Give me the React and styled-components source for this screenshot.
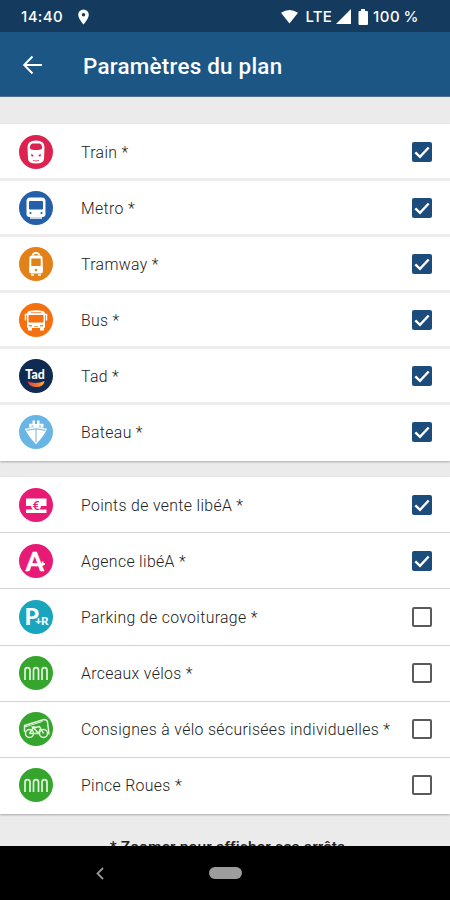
import { useState } from "react";
import styled, { createGlobalStyle } from "styled-components";

const GlobalStyle = createGlobalStyle`
  * {
    box-sizing: border-box;
  }
  body {
    margin: 0;
    font-family: Roboto, "Liberation Sans", sans-serif;
  }
`;

const Screen = styled.div`
  display: flex;
  flex-direction: column;
  width: 450px;
  height: 900px;
  overflow: hidden;
  background: #ebebeb;
`;

const StatusBar = styled.div`
  flex: none;
  display: flex;
  align-items: center;
  justify-content: space-between;
  height: 32px;
  padding: 1px 31px 0 21px;
  background: #143b5e;
  color: #fff;
  font-family: Inter, Roboto, sans-serif;
  font-size: 15px;
  font-weight: 500;
`;

const StatusGroup = styled.div`
  display: flex;
  align-items: center;
  svg {
    display: block;
  }
`;

const Time = styled.span`
  width: 57px;
  letter-spacing: 0.4px;
`;

const Network = styled.span`
  margin: 0 4px 0 7px;
  letter-spacing: 0.2px;
`;

const Battery = styled.span`
  margin-left: 5px;
  letter-spacing: 0.5px;
  word-spacing: -1px;
`;

const Header = styled.header`
  flex: none;
  display: flex;
  align-items: center;
  height: 65px;
  padding: 1px 22px 0;
  background: #1c5685;
  border-bottom: 1px solid #536f91;
`;

const BackButton = styled.button`
  display: flex;
  width: 61px;
  padding: 0;
  border: none;
  background: none;
  color: #fff;
`;

const Title = styled.h1`
  margin: 2px 0 0;
  color: #fff;
  font-size: 22.4px;
  font-weight: 500;
  letter-spacing: 0.24px;
`;

const Content = styled.main`
  flex: 1;
  min-height: 0;
  overflow: hidden;
  padding-top: 27px;
`;

const Card = styled.section`
  height: 337px;
  margin-bottom: 16px;
  padding-top: ${(p) => (p.$thin ? 0 : "1px")};
  display: grid;
  grid-template-rows: repeat(6, 1fr);
  background: #fff;
  box-shadow: 0 1px 2px rgba(0, 0, 0, 0.28);
`;

const Row = styled.label`
  display: flex;
  align-items: center;
  min-height: 0;
  padding: 0 18px 0 19px;
  border-bottom: ${(p) => (p.$thin ? "1.5px solid #d3d3d3" : "3px solid #ededed")};
  &:last-child {
    border-bottom-color: transparent;
  }
`;

const Label = styled.span`
  flex: 1;
  margin-left: 28px;
  padding-top: 1px;
  color: #222;
  font-size: 15.8px;
  font-weight: 300;
  letter-spacing: 0.35px;
  white-space: nowrap;
`;

const HiddenInput = styled.input`
  position: absolute;
  opacity: 0;
`;

const Box = styled.span`
  display: flex;
  align-items: center;
  justify-content: center;
  width: 20px;
  height: 20px;
  margin-right: 0.5px;
  border: 2px solid ${(p) => (p.$on ? "#1b4c7c" : "#5a5a5a")};
  border-radius: 2px;
  background: ${(p) => (p.$on ? "#1b4c7c" : "#fff")};
`;

const Tick = styled.svg`
  flex: none;
  width: 18px;
  height: 18px;
`;

const Round = styled.svg`
  display: block;
  flex: none;
  width: 34px;
  height: 34px;
`;

const Note = styled.p`
  margin: 0;
  padding: 8px 0 0 5px;
  text-align: center;
  color: #222;
  font-size: 15.5px;
  font-weight: 500;
  letter-spacing: 0.15px;
`;

const NavBar = styled.nav`
  flex: none;
  display: grid;
  grid-template-columns: 1fr 33px 1fr;
  align-items: center;
  height: 54px;
  background: #000;
`;

const NavBack = styled.button`
  display: flex;
  justify-content: center;
  padding: 0 9px 0 0;
  border: none;
  background: none;
`;

const HomePill = styled.span`
  height: 12px;
  border-radius: 6px;
  background: #9d9d9d;
`;

const Hoops = () => (
  <path
    d="M6 24V14.200a2.500 2.500 0 0 1 5 0V24M14.500 24V14.200a2.500 2.500 0 0 1 5 0V24M23 24V14.200a2.500 2.500 0 0 1 5 0V24"
    fill="none"
    stroke="#e2f5dc"
    strokeWidth="1.7"
  />
);

const icons = {
  train: {
    color: "#dc2350",
    art: (
      <>
        <path d="M8.500 12Q8.500 5.500 17 5.500T25.500 12L25 24Q24.500 28.500 17 28.500T9 24Z" fill="#fff" />
        <path d="M13.500 8.500h7Q23 9 23.200 13Q22.500 15 17 15T10.800 13Q11 9 13.500 8.500Z" fill="#dc2350" />
        <path d="M12 19l2.500 1-.5 1.500h-1.500ZM22 19l-2.500 1 .5 1.500h1.500Z" fill="#dc2350" />
        <path d="M14 25.500q3 1 6 0" stroke="#dc2350" strokeWidth=".8" fill="none" />
      </>
    ),
  },
  metro: {
    color: "#2460a7",
    art: (
      <>
        <path d="M11 6.500H23Q26.500 6.500 26.500 10V23Q26.500 26 23.500 26H10.500Q7.500 26 7.500 23V10Q7.500 6.500 11 6.500Z" fill="#fff" />
        <rect x="10" y="10" width="14" height="8.500" rx=".7" fill="#2460a7" />
        <circle cx="11.500" cy="22" r="1.100" fill="#2460a7" />
        <circle cx="22.500" cy="22" r="1.100" fill="#2460a7" />
        <path d="M11 27h12" stroke="#fff" strokeWidth="1.500" />
      </>
    ),
  },
  tram: {
    color: "#e28117",
    art: (
      <>
        <path d="M13.800 8.500Q13.800 5.800 17 5.800T20.200 8.500" fill="none" stroke="#fff" strokeWidth="1.700" />
        <path d="M12.500 8.500h9Q23.200 8.500 23.500 10.500L24 24Q24 26.500 22 26.500H12Q10 26.500 10 24L10.500 10.500Q10.800 8.500 12.500 8.500Z" fill="#fff" />
        <rect x="12.300" y="11.500" width="9.400" height="7.500" rx=".6" fill="#e28117" />
        <circle cx="17" cy="23" r="1.300" fill="#e28117" />
        <path d="M12 28h3M19 28h3" stroke="#fff" strokeWidth="1.300" />
      </>
    ),
  },
  bus: {
    color: "#f5700e",
    art: (
      <>
        <path d="M10 8Q17 6.500 24 8Q26 8.500 26 11V24Q26 25 25 25v2.500h-4V25h-8v2.500H9V25Q8 25 8 24V11Q8 8.500 10 8Z" fill="#fff" />
        <path d="M8 11.500H6.500v6M26 11.500h1.500v6" stroke="#fff" strokeWidth="1.500" fill="none" />
        <rect x="9.500" y="12" width="15" height="7.500" rx=".6" fill="#f5700e" />
        <path d="M12 9.700h10" stroke="#f5700e" strokeWidth=".8" />
        <path d="M10.500 22l2.500 1h-2.500ZM23.500 22l-2.500 1h2.500ZM15 23.500h4" fill="#f5700e" stroke="#f5700e" strokeWidth=".7" />
      </>
    ),
  },
  tad: {
    color: "#102b52",
    art: (
      <>
        <defs>
          <linearGradient id="smile">
            <stop offset="0" stopColor="#e23d48" />
            <stop offset=".65" stopColor="#f47d2b" />
            <stop offset="1" stopColor="#ffbd3a" />
          </linearGradient>
        </defs>
        <text x="16" y="19.500" textAnchor="middle" fontFamily="Lato" fontWeight="900" fontSize="12.300" fill="#fff">
          Tad
        </text>
        <path d="M8.500 22.500Q17 25.500 25.500 22Q24.500 28 17.500 28Q10.500 28 8.500 22.500Z" fill="url(#smile)" />
      </>
    ),
  },
  boat: {
    color: "#69b6e4",
    art: (
      <>
        <path d="M10 12.500V8.800h3.500V5.500h2.500V9h2V5.500h2.500v3.300H24.500v3.700Z" fill="#fff" />
        <path d="M5.800 13.700L17 12l11.200 1.700Q24.500 21.500 17 29.300Q9.500 21.500 5.800 13.700Z" fill="#fff" />
        <path d="M7.500 15.300L17 13.800l9.500 1.500M17 14v13" stroke="#69b6e4" fill="none" strokeWidth="1" />
        <path d="M12.500 11h2M20 11h2" stroke="#69b6e4" strokeWidth="1.200" />
      </>
    ),
  },
  sale: {
    color: "#e71b75",
    art: (
      <>
        <path d="M7 10.500h20.500V18H7ZM7 21.500h20.500V25H7Z" fill="#fff" />
        <circle cx="17" cy="17.800" r="5" fill="#fff" />
        <text x="17" y="22" textAnchor="middle" fontFamily="Roboto" fontWeight="500" fontSize="12.500" fill="#e71b75">
          €
        </text>
      </>
    ),
  },
  agency: {
    color: "#e71b75",
    art: (
      <>
        <text x="15.800" y="26.500" textAnchor="middle" fontFamily="Lato" fontWeight="700" fontSize="26" fill="#fff" stroke="#fff" strokeWidth=".5">
          A
        </text>
        <path d="M17 21.500Q21 20 26 20M23.500 17.500v4.500" fill="none" stroke="#fff" strokeWidth="1.800" />
      </>
    ),
  },
  parking: {
    color: "#18a5bd",
    art: (
      <text x="5.500" y="24.800" fontFamily="Lato" fontWeight="900" fontSize="23" fill="#fff">
        P
        <tspan dx="-3.800" dy="0.500" fontSize="11.500" letterSpacing="-0.8">
          +R
        </tspan>
      </text>
    ),
  },
  hoops: { color: "#35a52e", art: <Hoops /> },
  locker: {
    color: "#35a52e",
    art: (
      <g fill="none" stroke="#e2f5dc" strokeWidth="1.500" strokeLinejoin="round">
        <path d="M5.500 20V13.500L25 7.500Q28 7.500 28.500 10L30 22.500" />
        <path d="M6 15L23.500 9.500" strokeWidth="1" />
        <circle cx="10.500" cy="21.500" r="4" />
        <circle cx="24.500" cy="21.500" r="4" />
        <path d="M10.500 21.500l4-6 5 6h-9M14.500 16l6-1.500 4 7M19.500 21.500l2-5M12.500 15h4" />
      </g>
    ),
  },
};

const groups = [
  {
    thin: false,
    items: [
      { id: "train", icon: "train", label: "Train *", on: true },
      { id: "metro", icon: "metro", label: "Metro *", on: true },
      { id: "tram", icon: "tram", label: "Tramway *", on: true },
      { id: "bus", icon: "bus", label: "Bus *", on: true },
      { id: "tad", icon: "tad", label: "Tad *", on: true },
      { id: "boat", icon: "boat", label: "Bateau *", on: true },
    ],
  },
  {
    thin: true,
    items: [
      { id: "sale", icon: "sale", label: "Points de vente libéA *", on: true },
      { id: "agency", icon: "agency", label: "Agence libéA *", on: true },
      { id: "parking", icon: "parking", label: "Parking de covoiturage *", on: false },
      { id: "racks", icon: "hoops", label: "Arceaux vélos *", on: false },
      { id: "locker", icon: "locker", label: "Consignes à vélo sécurisées individuelles *", on: false },
      { id: "wheel", icon: "hoops", label: "Pince Roues *", on: false },
    ],
  },
];

const Setting = ({ item, thin }) => {
  const [on, setOn] = useState(item.on);
  const icon = icons[item.icon];

  return (
    <Row $thin={thin}>
      <Round viewBox="0 0 34 34">
        <circle cx="17" cy="17" r="17" fill={icon.color} />
        {icon.art}
      </Round>
      <Label>{item.label}</Label>
      <HiddenInput type="checkbox" checked={on} onChange={() => setOn(!on)} />
      <Box $on={on}>
        {on && (
          <Tick viewBox="0 0 18 18">
            <path d="M2.300 9.300l4.700 4.500 8.700-9.300" fill="none" stroke="#fff" strokeWidth="2.400" />
          </Tick>
        )}
      </Box>
    </Row>
  );
};

const App = () => (
  <Screen>
    <GlobalStyle />
    <StatusBar>
      <StatusGroup>
        <Time>14:40</Time>
        <svg width="11" height="16" viewBox="0 0 11 16">
          <path
            d="M5.500.500A5.300 5.300 0 0 0 .2 5.800C.2 9.700 5.500 15.500 5.500 15.500S10.800 9.700 10.800 5.800A5.300 5.300 0 0 0 5.500.500ZM5.500 7.600a1.800 1.800 0 1 1 0-3.600 1.800 1.800 0 0 1 0 3.600Z"
            fill="#fff"
          />
        </svg>
      </StatusGroup>
      <StatusGroup>
        <svg width="17" height="15" viewBox="0 0 18 15">
          <path d="M0 3.500Q9-2.500 18 3.500L9 15Z" fill="#fff" />
        </svg>
        <Network>LTE</Network>
        <svg width="15" height="15" viewBox="0 0 15 15">
          <path d="M15 0V15H0Z" fill="#fff" />
        </svg>
        <svg width="17" height="16" viewBox="0 0 17 16">
          <path d="M10 0h4v2h2q1 0 1 1v12q0 1-1 1H8.500q-1 0-1-1V3q0-1 1-1H10Z" fill="#fff" />
        </svg>
        <Battery>100 %</Battery>
      </StatusGroup>
    </StatusBar>
    <Header>
      <BackButton aria-label="Retour">
        <svg width="22" height="20" viewBox="0 0 22 20">
          <path d="M20 10H2.500M10.500 1.500L2.200 10l8.300 8.500" fill="none" stroke="#fff" strokeWidth="2" />
        </svg>
      </BackButton>
      <Title>Paramètres du plan</Title>
    </Header>
    <Content>
      {groups.map((group, i) => (
        <Card key={i} $thin={group.thin}>
          {group.items.map((item) => (
            <Setting key={item.id} item={item} thin={group.thin} />
          ))}
        </Card>
      ))}
      <Note>* Zoomer pour afficher ces arrêts</Note>
    </Content>
    <NavBar>
      <NavBack aria-label="Retour">
        <svg width="8" height="13" viewBox="0 0 8 13">
          <path d="M7 1L1.500 6.500 7 12" fill="none" stroke="#969696" strokeWidth="1.800" />
        </svg>
      </NavBack>
      <HomePill />
    </NavBar>
  </Screen>
);

export default App;
